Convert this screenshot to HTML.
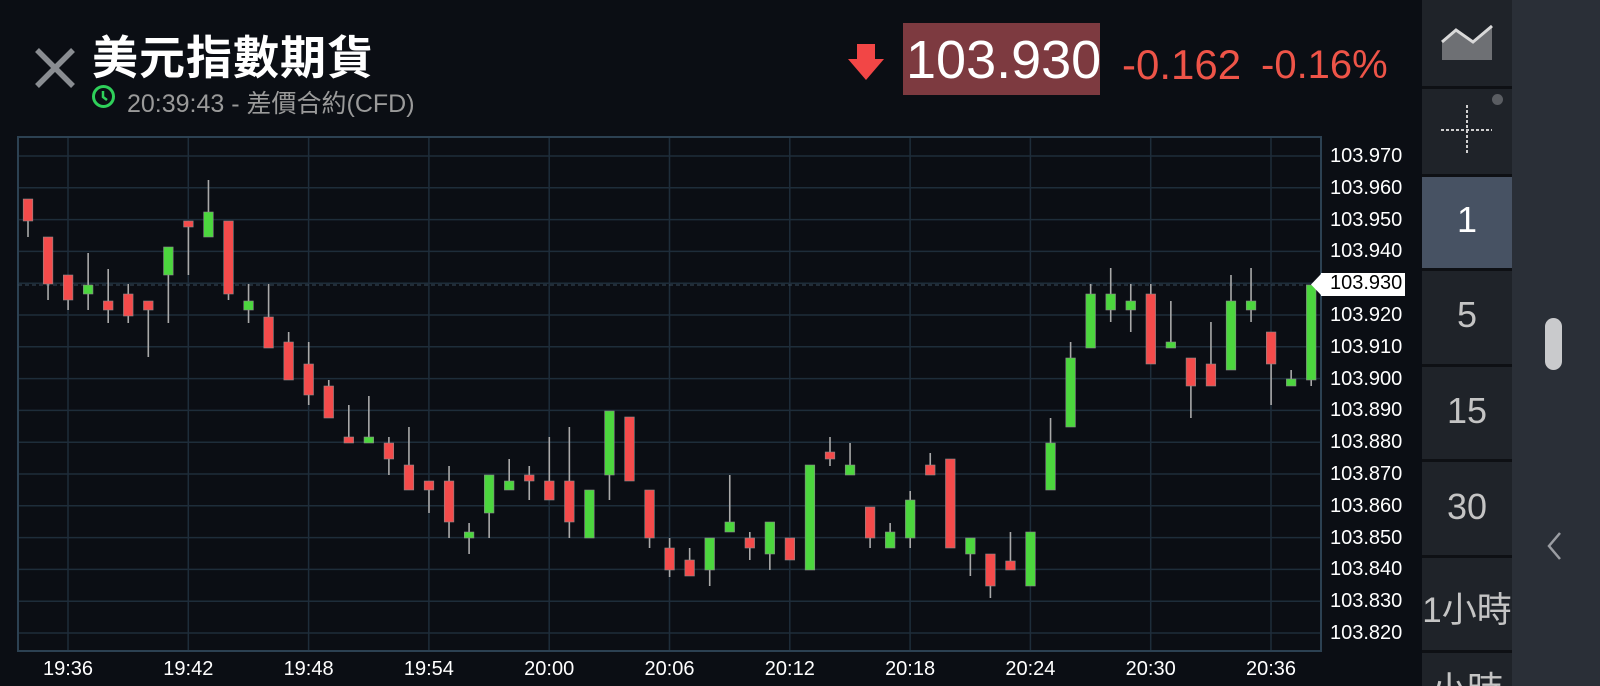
<!DOCTYPE html>
<html><head><meta charset="utf-8">
<style>
*{margin:0;padding:0;box-sizing:border-box}
html{width:1600px;height:686px;overflow:hidden}
body{width:1600px;height:686px;background:#0b0e14;overflow:hidden;position:relative;font-family:"Liberation Sans","Noto Sans CJK TC",sans-serif}
.abs{position:absolute}
.side{left:1422px;top:0;width:90px;height:686px;background:#1f2329;overflow:hidden}
.rp{left:1512px;top:0;width:88px;height:686px;background:#2a2f37}
.sep{left:1422px;width:90px;height:3px;background:#0e1014}
.tf{left:0;width:90px;text-align:center;color:#c4c4c4;font-size:36px}
.pl{left:1330px;color:#fff;font-size:20px;line-height:20px}
.tl{color:#fff;font-size:20px;line-height:22px;top:658px;width:80px;text-align:center}
</style></head><body>
<svg class="abs" style="left:34px;top:47px" width="42" height="42"><path d="M3 3L39 39M39 3L3 39" stroke="#8a8d92" stroke-width="5.5"/></svg>
<div class="abs" style="left:92px;top:22px;color:#fff;font-size:46px;font-weight:bold;letter-spacing:1px">美元指數期貨</div>
<svg class="abs" style="left:91px;top:84px" width="25" height="25"><circle cx="12.5" cy="12.5" r="10" fill="none" stroke="#2fd05a" stroke-width="3"/><path d="M12 7V13L16 16" stroke="#2fd05a" stroke-width="2.5" fill="none"/></svg>
<div class="abs" style="left:127px;top:84px;color:#9a9a9a;font-size:25px">20:39:43 - 差價合約(CFD)</div>
<svg class="abs" style="left:848px;top:44px" width="36" height="36"><path d="M9 0H27V15H36L18 36L0 15H9Z" fill="#f24646"/></svg>
<div class="abs" style="left:903px;top:23px;width:197px;height:72px;background:#7d3a40"></div>
<div class="abs" style="left:906px;top:29px;color:#fff;font-size:54px;line-height:62px">103.930</div>
<div class="abs" style="left:1122px;top:41px;color:#ee5448;font-size:42px;line-height:48px">-0.162</div>
<div class="abs" style="left:1261px;top:41px;color:#ee5448;font-size:40px;line-height:48px">-0.16%</div>

<svg class="abs" id="ch" style="left:0;top:0" width="1420" height="686"></svg>
<div class="abs" style="left:1321px;top:273px;width:84px;height:23px;background:#fff"></div>
<svg class="abs" style="left:1311px;top:273px" width="11" height="23"><path d="M11 0V23L0 11.5Z" fill="#fff"/></svg>
<div id="lbl"></div>

<div class="abs rp"></div>
<div class="abs side">
<div class="abs" style="left:0;top:176px;width:90px;height:92px;background:#475263"></div>
<div class="abs tf" style="top:199px;color:#fff">1</div>
<div class="abs tf" style="top:294px">5</div>
<div class="abs tf" style="top:390px">15</div>
<div class="abs tf" style="top:486px">30</div>
<div class="abs tf" style="top:582px;font-size:35px">1小時</div>
<div class="abs tf" style="top:670px;height:16px;overflow:hidden;line-height:40px">小時</div>
</div>
<svg class="abs" style="left:1440px;top:22px" width="56" height="40"><path d="M2 20L16 8L33 20L52 4V38H2Z" fill="#6e7074"/><path d="M2 20L16 8L33 20L52 4" stroke="#d9d9d9" stroke-width="3" fill="none"/></svg>
<div class="abs sep" style="top:86px"></div>
<svg class="abs" style="left:1440px;top:100px" width="70" height="60"><path d="M1 30H52M27 5V55" stroke="#cfcfcf" stroke-width="2" stroke-dasharray="3 2"/></svg>
<div class="abs" style="left:1492px;top:94px;width:11px;height:11px;border-radius:50%;background:#5a5d62"></div>
<div class="abs sep" style="top:174px"></div>
<div class="abs sep" style="top:268px"></div>
<div class="abs sep" style="top:364px"></div>
<div class="abs sep" style="top:459px"></div>
<div class="abs sep" style="top:555px"></div>
<div class="abs sep" style="top:650px"></div>
<div class="abs" style="left:1545px;top:318px;width:17px;height:52px;border-radius:9px;background:#c9cacc"></div>
<svg class="abs" style="left:1545px;top:530px" width="20" height="32"><path d="M15 3L4 16L15 29" stroke="#9a9da2" stroke-width="2.5" fill="none"/></svg>

<script>
var s='',Y=function(p){return 156+(103.970-p)*3180};
for(var k=0;k<16;k++){var y=Y(103.970-k*0.01);s+='<line x1="18" x2="1321" y1="'+y+'" y2="'+y+'" stroke="#1e2d3a" stroke-width="1.5"/>';}
for(var k=0;k<11;k++){var x=68+k*120.3;s+='<line y1="137" y2="651" x1="'+x+'" x2="'+x+'" stroke="#1e2d3a" stroke-width="1.5"/>';}
s+='<rect x="18" y="137" width="1303" height="514" fill="none" stroke="#2c4152" stroke-width="2"/>';
s+='<line x1="18" x2="1321" y1="285" y2="285" stroke="#3a4c5c" stroke-width="1" stroke-dasharray="4 3"/>';
var d=[[199,221,199,237,'r'],[237,284,237,300,'r'],[275,300,275,310,'r'],[285,294,253,310,'g'],[301,310,269,323,'r'],[294,316,284,323,'r'],[301,310,301,357,'r'],[247,275,247,323,'g'],[221,227,221,275,'r'],[212,237,180,237,'g'],[221,294,221,300,'r'],[301,310,284,323,'g'],[317,348,284,348,'r'],[342,380,332,380,'r'],[364,395,342,405,'r'],[386,418,380,418,'r'],[437,443,405,443,'r'],[437,443,396,443,'g'],[443,459,437,475,'r'],[465,490,427,490,'r'],[481,490,481,513,'r'],[481,522,466,538,'r'],[532,538,523,554,'g'],[475,513,475,538,'g'],[481,490,459,490,'g'],[475,481,466,500,'r'],[481,500,437,500,'r'],[481,522,427,538,'r'],[490,538,490,538,'g'],[411,475,411,500,'g'],[417,481,417,481,'r'],[490,538,490,548,'r'],[548,570,538,577,'r'],[560,576,548,576,'r'],[538,570,538,586,'g'],[522,532,475,532,'g'],[538,548,532,560,'r'],[522,554,522,570,'g'],[538,560,538,560,'r'],[465,570,465,570,'g'],[452,459,437,466,'r'],[465,475,443,475,'g'],[507,538,507,548,'r'],[532,548,523,548,'g'],[500,538,491,548,'g'],[465,475,453,475,'r'],[459,548,459,548,'r'],[538,554,538,576,'g'],[554,586,554,598,'r'],[561,570,532,570,'r'],[532,586,532,586,'g'],[443,490,418,490,'g'],[358,427,342,427,'g'],[294,348,284,348,'g'],[294,310,268,322,'g'],[301,310,284,332,'g'],[294,364,284,364,'r'],[342,348,301,348,'g'],[358,386,358,418,'r'],[364,386,322,386,'r'],[301,370,275,370,'g'],[301,310,268,322,'g'],[332,364,332,405,'r'],[379,386,370,386,'g'],[285,380,285,386,'g']];
d.forEach(function(c,i){var x=28+20.05*i;
s+='<line x1="'+x+'" x2="'+x+'" y1="'+c[2]+'" y2="'+c[3]+'" stroke="#a9a9a9" stroke-width="1.6"/>';
s+='<rect x="'+(x-4.8)+'" y="'+c[0]+'" width="9.6" height="'+Math.max(5,c[1]-c[0])+'" fill="'+(c[4]=='r'?'#f44b4b':'#4cd63e')+'" stroke="#8a8a8a" stroke-width="0.6"/>';});
document.getElementById('ch').innerHTML=s;
var h='';
for(var k=0;k<16;k++){var p=103.970-k*0.01;h+='<div class="abs pl" style="top:'+(Y(p)-10)+'px;'+(k==4?'color:#000':'')+'">'+p.toFixed(3)+'</div>';}
var t=['19:36','19:42','19:48','19:54','20:00','20:06','20:12','20:18','20:24','20:30','20:36'];
t.forEach(function(v,k){h+='<div class="abs tl" style="left:'+(68+k*120.3-40)+'px">'+v+'</div>';});
document.getElementById('lbl').innerHTML=h;
</script>
</body></html>
